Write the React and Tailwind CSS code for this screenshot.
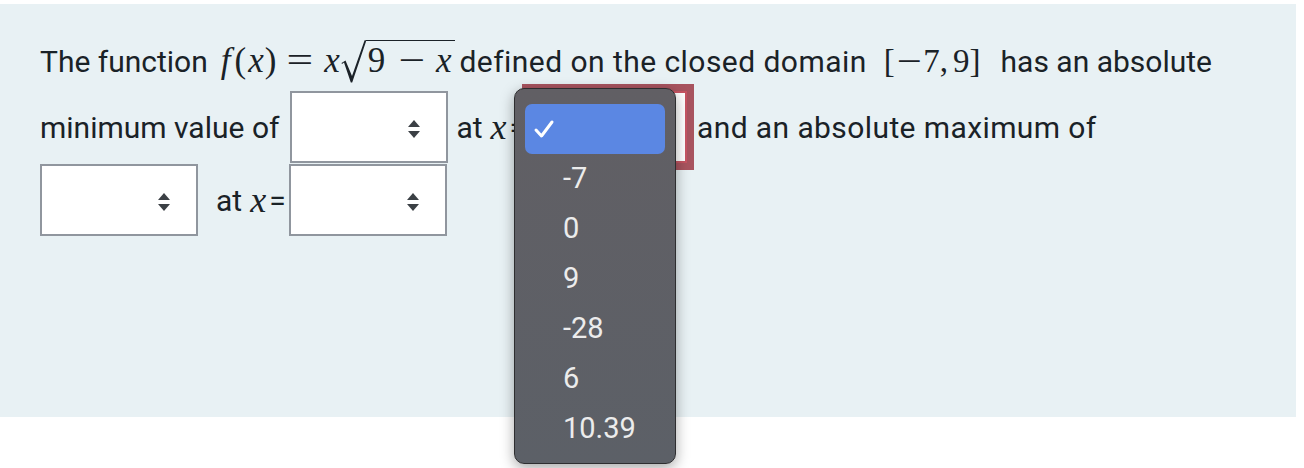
import React from 'react';

const SANS = { fontFamily: 'Roboto, "Liberation Sans", sans-serif' };
const SERIF = { fontFamily: '"Liberation Serif", "DejaVu Serif", serif' };

const Arrows = () => (
  <svg width="12" height="18" viewBox="0 0 12 18" className="absolute right-[26px] top-[27px]">
    <path d="M0 7 L6 0 L12 7 Z" fill="#3b4045" />
    <path d="M0 11 L6 18 L12 11 Z" fill="#3b4045" />
  </svg>
);

const Select = ({ className = '' }) => (
  <div className={`relative shrink-0 w-[158px] h-[72px] bg-white border-2 border-[#90969e] ${className}`}>
    <Arrows />
  </div>
);

const I = ({ children, className = '' }) => (
  <span className={`italic ${className}`} style={SERIF}>{children}</span>
);

// wide TeX-like operator (= and −)
const Op = ({ children, className = '' }) => (
  <span className={`inline-block scale-x-[1.35] ${className}`}>{children}</span>
);

const Sqrt = ({ children }) => (
  <span className="relative inline-block ml-[26px] pl-[2px] pr-[3px] pt-[2px] border-t-[1.5px] border-[#1b2228] leading-none">
    <svg width="25" height="44" viewBox="0 0 25 44" className="absolute left-[-25px] top-[-2.5px]">
      <path d="M0.5 24 L4.5 21.5 L11 37 L23.6 1.2 L25 1.2 L25 2.6 L11.2 43.6 L9.8 43.6 L3 23.4 L1 25 Z" fill="#1b2228" />
    </svg>
    {children}
  </span>
);

const options = ['-7', '0', '9', '-28', '6', '10.39'];

export default function App() {
  return (
    <div className="relative w-[1304px] h-[468px] bg-white overflow-hidden text-[#1a2227]" style={SANS}>
      <div className="mt-[4px] w-[1296px] h-[413px] bg-[#e8f1f4] pt-[31px] pl-[40px] text-[30px]">
        <div className="h-[52px] leading-[52px] whitespace-nowrap">
          <span>The function</span>
          <span className="text-[35px]" style={SERIF}>
            <I className="ml-[13px]">f</I>
            <span className="ml-[4px]">(</span>
            <I className="ml-[2px]">x</I>
            <span className="ml-[1px]">)</span>
            <Op className="ml-[14px]">=</Op>
            <I className="ml-[14px]">x</I>
            <Sqrt>
              <span>9</span>
              <Op className="ml-[17px]">−</Op>
              <I className="ml-[14px]">x</I>
            </Sqrt>
          </span>
          <span className="ml-[5px] tracking-[0.45px]">defined on the closed domain</span>
          <span className="ml-[17px] text-[33px]" style={SERIF}>
            [<Op className="mx-[5px]">−</Op>7,<span className="ml-[5px]">9</span>]
          </span>
          <span className="ml-[20px]">has an absolute</span>
        </div>

        <div className="mt-[4px] h-[72px] flex items-center whitespace-nowrap">
          <span>minimum value of</span>
          <Select className="ml-[11px]" />
          <span className="ml-[8px]">at</span>
          <I className="ml-[8px] text-[36px]">x</I>
          <span className="ml-[3px]">=</span>
          <div className="relative shrink-0 ml-[3px] w-[158px] h-[72px] bg-white border-2 border-[#c65462] shadow-[0_0_0_7px_#a8545f]" />
          <span className="ml-[10px] tracking-[0.4px]">and an absolute maximum of</span>
        </div>

        <div className="mt-[1px] h-[72px] flex items-center whitespace-nowrap">
          <Select />
          <span className="ml-[18px]">at</span>
          <I className="ml-[8px] text-[36px]">x</I>
          <span className="ml-[3px]">=</span>
          <Select className="ml-[3px]" />
        </div>
      </div>

      <div className="absolute left-[514px] top-[88px] w-[162px] h-[376px] rounded-[10px] border border-[#2e2e30] bg-gradient-to-b from-[#615f64] to-[#5c6067] shadow-[0_4px_14px_rgba(0,0,0,0.35)] px-[10px] pt-[15px]">
        <div className="h-[50px] rounded-[7px] bg-[#5b87e3] flex items-center pl-[8px]">
          <svg width="22" height="20" viewBox="0 0 22 20">
            <path d="M3 11 L8.5 17 L19 3" fill="none" stroke="#ffffff" strokeWidth="3" strokeLinecap="round" strokeLinejoin="round" />
          </svg>
        </div>
        {options.map((o) => (
          <div key={o} className="h-[50px] flex items-center pl-[38px] text-[29px] text-[#ececec]">
            {o}
          </div>
        ))}
      </div>
    </div>
  );
}
